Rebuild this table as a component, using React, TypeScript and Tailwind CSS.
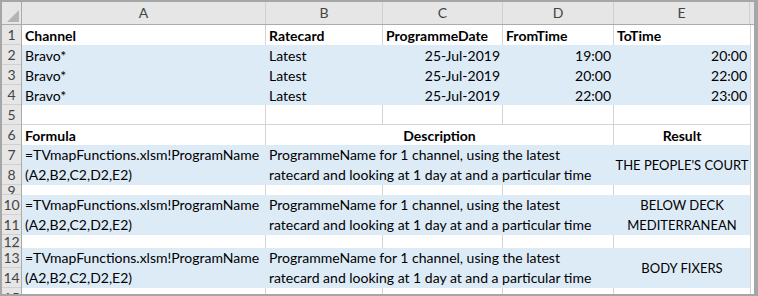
import React from 'react';

const font = { fontFamily: 'Lato, "Open Sans", sans-serif' };

type Num = { n: string; h: string; lh?: string };

function RowHead({ nums }: { nums: Num[] }) {
    return (
        <div className="w-[20px] shrink-0 flex flex-col bg-[#e6e6e6] border-r border-[#ababab]">
            {nums.map((num) => (
                <div
                    key={num.n}
                    className={`${num.h} ${num.lh ?? 'leading-[19px]'} flex items-start justify-center overflow-hidden border-b border-[#d0d0d0] text-[#444]`}
                >
                    {num.n}
                </div>
            ))}
        </div>
    );
}

function Stub() {
    return <div className="w-[4px] shrink-0 bg-white border-l border-[#d4d4d4]" />;
}

// plain white spacer row with gridlines
function BlankRow({ n, h, lh, line }: { n: string; h: string; lh?: string; line?: boolean }) {
    return (
        <div className={`flex shrink-0 ${h}`}>
            <RowHead nums={[{ n, h, lh }]} />
            <div className={`flex flex-1 bg-white ${line ? 'border-b border-[#d4d4d4]' : ''}`}>
                <div className="w-[244px] border-r border-[#d4d4d4]" />
                <div className="w-[117px] border-r border-[#d4d4d4]" />
                <div className="w-[120px] border-r border-[#d4d4d4]" />
                <div className="w-[111px] border-r border-[#d4d4d4]" />
                <div className="w-[136px]" />
            </div>
            <Stub />
        </div>
    );
}

const data = [
    { n: '2', from: '19:00', to: '20:00' },
    { n: '3', from: '20:00', to: '22:00' },
    { n: '4', from: '22:00', to: '23:00' },
];

const formulas = [
    { nums: ['7', '8'], result: ["THE PEOPLE'S COURT"] },
    { nums: ['10', '11'], result: ['BELOW DECK', 'MEDITERRANEAN'] },
    { nums: ['13', '14'], result: ['BODY FIXERS'] },
];

export default function App() {
    return (
        <div
            className="w-[758px] h-[296px] overflow-hidden bg-[#a6a6a6] pt-[2px] pl-[2px] pr-[4px] pb-[2px] text-[14px] text-black"
            style={font}
        >
            <div className="flex flex-col h-full bg-white overflow-hidden">
                {/* Column headers */}
                <div className="flex h-[23px] shrink-0 bg-[#e6e6e6] border-b border-[#ababab] text-[#444]">
                    <div className="w-[20px] shrink-0 border-r border-[#ababab] flex items-end justify-end">
                        <svg width="12" height="12" viewBox="0 0 12 12" className="mb-[2px] mr-[2px]">
                            <polygon points="12,0 12,12 0,12" fill="#b4b4b4" />
                        </svg>
                    </div>
                    {[
                        ['A', 'w-[244px]'],
                        ['B', 'w-[117px]'],
                        ['C', 'w-[120px]'],
                        ['D', 'w-[111px]'],
                        ['E', 'w-[136px]'],
                    ].map(([l, w]) => (
                        <div key={l} className={`${w} shrink-0 border-r border-[#d0d0d0] flex items-center justify-center leading-none`}>
                            {l}
                        </div>
                    ))}
                    <div className="flex-1" />
                </div>

                {/* Row 1 */}
                <div className="flex h-[20px] shrink-0">
                    <RowHead nums={[{ n: '1', h: 'h-[20px]' }]} />
                    <div className="flex flex-1 font-bold leading-[19px]">
                        <div className="w-[244px] px-[3px] border-r border-[#d4d4d4] flex items-end">Channel</div>
                        <div className="w-[117px] px-[3px] border-r border-[#d4d4d4] flex items-end">Ratecard</div>
                        <div className="w-[120px] px-[3px] border-r border-[#d4d4d4] flex items-end">ProgrammeDate</div>
                        <div className="w-[111px] px-[3px] border-r border-[#d4d4d4] flex items-end">FromTime</div>
                        <div className="w-[136px] px-[3px] flex items-end">ToTime</div>
                    </div>
                    <Stub />
                </div>

                {/* Rows 2-4 */}
                {data.map((r) => (
                    <div key={r.n} className="flex h-[20px] shrink-0">
                        <RowHead nums={[{ n: r.n, h: 'h-[20px]' }]} />
                        <div className="flex flex-1 bg-[#ddebf7] leading-[19px]">
                            <div className="w-[244px] px-[3px] flex items-end">Bravo*</div>
                            <div className="w-[117px] px-[3px] flex items-end">Latest</div>
                            <div className="w-[120px] px-[3px] flex items-end justify-end">25-Jul-2019</div>
                            <div className="w-[111px] px-[3px] flex items-end justify-end">{r.from}</div>
                            <div className="w-[136px] px-[3px] flex items-end justify-end">{r.to}</div>
                        </div>
                        <Stub />
                    </div>
                ))}

                <BlankRow n="5" h="h-[20px]" line />

                {/* Row 6 */}
                <div className="flex h-[20px] shrink-0">
                    <RowHead nums={[{ n: '6', h: 'h-[20px]' }]} />
                    <div className="flex flex-1 font-bold leading-[19px]">
                        <div className="w-[244px] px-[3px] border-r border-[#d4d4d4] flex items-end">Formula</div>
                        <div className="w-[348px] px-[3px] border-r border-[#d4d4d4] flex items-end justify-center">Description</div>
                        <div className="w-[136px] px-[3px] flex items-end justify-center">Result</div>
                    </div>
                    <Stub />
                </div>

                {formulas.map((f, i) => (
                    <React.Fragment key={f.nums[0]}>
                        <div className="flex h-[40px] shrink-0">
                            <RowHead nums={f.nums.map((n) => ({ n, h: 'h-[20px]' }))} />
                            <div className="flex flex-1 bg-[#ddebf7] leading-[20px]">
                                <div className="w-[244px] px-[3px] whitespace-nowrap overflow-hidden">
                                    <div>=TVmapFunctions.xlsm!ProgramName</div>
                                    <div>(A2,B2,C2,D2,E2)</div>
                                </div>
                                <div className="w-[348px] px-[3px] whitespace-nowrap">
                                    <div>ProgrammeName for 1 channel, using the latest</div>
                                    <div>ratecard and looking at 1 day at and a particular time</div>
                                </div>
                                <div className="w-[136px] flex flex-col items-center justify-center whitespace-nowrap text-[13px]">
                                    {f.result.map((t) => (
                                        <div key={t}>{t}</div>
                                    ))}
                                </div>
                            </div>
                            <Stub />
                        </div>
                        {i === 0 && <BlankRow n="9" h="h-[10px]" lh="leading-[12px]" />}
                        {i === 1 && <BlankRow n="12" h="h-[13px]" lh="leading-[13px]" />}
                        {i === 2 && <BlankRow n="15" h="h-[20px]" />}
                    </React.Fragment>
                ))}
            </div>
        </div>
    );
}
